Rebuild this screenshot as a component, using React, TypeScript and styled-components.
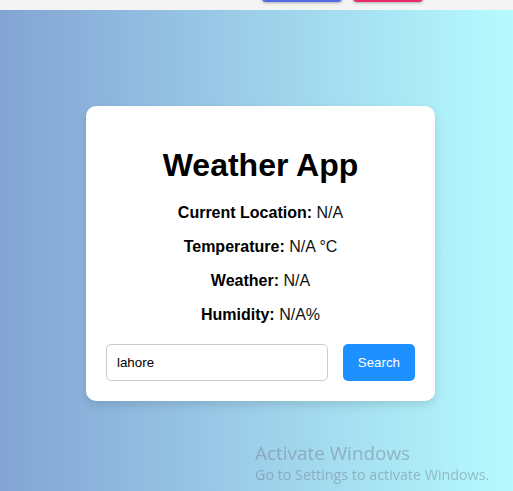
import React, { useState } from "react";
import styled, { createGlobalStyle } from "styled-components";

const GlobalStyle = createGlobalStyle`
  html, body {
    margin: 0;
    padding: 0;
    font-family: "Liberation Sans", Arial, sans-serif;
    overflow: hidden;
  }
`;

const TopBar = styled.div`
  height: 10px;
  background-color: #f4f4f4;
  display: flex;
  align-items: flex-end;
  padding: 0 0 8px 262px;
  box-sizing: border-box;
  gap: 11px;
`;

const TopButton = styled.button<{ $color: string; $width: number }>`
  flex: none;
  width: ${(p) => p.$width}px;
  height: 30px;
  border: none;
  border-radius: 4px;
  background-color: ${(p) => p.$color};
  box-shadow: 0 1px 3px rgba(0, 0, 0, 0.3);
`;

const Page = styled.div`
  height: calc(100vh - 10px);
  background: linear-gradient(to right, #83a4d4, #b6fbff);
  display: flex;
  justify-content: center;
  align-items: center;
  padding: 6px 0 0 8px;
  box-sizing: border-box;
`;

const Card = styled.div`
  width: 309px;
  padding: 20px;
  background-color: #fff;
  border-radius: 10px;
  box-shadow: 0 4px 10px rgba(0, 0, 0, 0.12);
  text-align: center;
`;

const Title = styled.h1`
  font-size: 32px;
  margin: 21px 0 20px;
  color: #000;
`;

const InfoLine = styled.p`
  font-size: 16px;
  margin: 16px 0;
  color: #111;
`;

const Label = styled.strong`
  color: #000;
`;

const SearchRow = styled.div`
  display: flex;
  gap: 15px;
  margin-top: 20px;
`;

const SearchInput = styled.input`
  flex: 1;
  min-width: 0;
  padding: 10px;
  font-family: "Liberation Sans", Arial, sans-serif;
  font-size: 13.33px;
  border: 1px solid #ccc;
  border-radius: 5px;
  color: #000;
  outline: none;
`;

const SearchButton = styled.button`
  padding: 10px 15px;
  border: none;
  border-radius: 5px;
  background-color: #1e90ff;
  color: #fff;
  font-family: "Liberation Sans", Arial, sans-serif;
  font-size: 13.33px;
  cursor: pointer;
`;

const Watermark = styled.div`
  position: fixed;
  left: 255px;
  bottom: 7px;
  font-family: "Open Sans", "Noto Sans", sans-serif;
  color: rgba(110, 120, 130, 0.45);
  pointer-events: none;
`;

const WatermarkTitle = styled.div`
  font-size: 18.9px;
  line-height: 24px;
`;

const WatermarkText = styled.div`
  font-size: 14.3px;
  line-height: 19px;
`;

const info = [
  { label: "Current Location:", value: "N/A" },
  { label: "Temperature:", value: "N/A °C" },
  { label: "Weather:", value: "N/A" },
  { label: "Humidity:", value: "N/A%" },
];

const App = () => {
  const [city, setCity] = useState("lahore");

  return (
    <>
      <GlobalStyle />
      <TopBar>
        <TopButton $color="#5468e6" $width={80} />
        <TopButton $color="#ea2a64" $width={70} />
      </TopBar>
      <Page>
        <Card>
          <Title>Weather App</Title>
          {info.map((item) => (
            <InfoLine key={item.label}>
              <Label>{item.label}</Label> {item.value}
            </InfoLine>
          ))}
          <SearchRow>
            <SearchInput value={city} onChange={(e) => setCity(e.target.value)} />
            <SearchButton>Search</SearchButton>
          </SearchRow>
        </Card>
      </Page>
      <Watermark>
        <WatermarkTitle>Activate Windows</WatermarkTitle>
        <WatermarkText>Go to Settings to activate Windows.</WatermarkText>
      </Watermark>
    </>
  );
};

export default App;
